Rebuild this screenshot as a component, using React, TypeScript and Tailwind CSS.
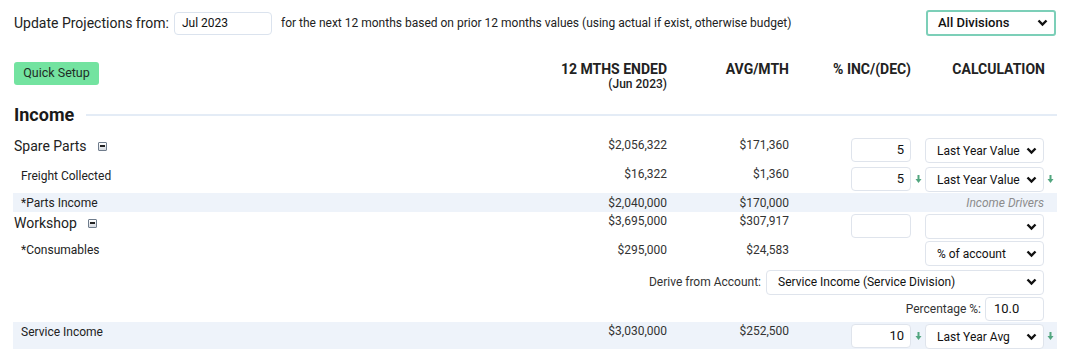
import React from "react";

const GreenArrow = () => (
  <svg width="7" height="9" viewBox="0 0 7 9" className="block">
    <rect x="2.5" y="0" width="2" height="5" fill="#52a67f" />
    <polygon points="0.5,4 6.5,4 3.5,8" fill="#52a67f" />
  </svg>
);

const Chevron = () => (
  <svg width="11" height="8" viewBox="0 0 11 8" className="block shrink-0">
    <polyline points="1.5,1.5 5.5,5.5 9.5,1.5" fill="none" stroke="#111" strokeWidth="2.4" />
  </svg>
);

const Collapse = () => (
  <span className="ml-[11px] inline-flex h-[9px] w-[9px] items-center justify-center rounded-[1px] border border-[#6f7c8c] bg-gradient-to-b from-white to-[#d4d8de]">
    <span className="h-[1.5px] w-[5px] bg-[#222]" />
  </span>
);

function NumBox({ value }: { value?: string }) {
  return (
    <div className="flex h-[24px] w-[60px] items-center justify-end rounded-[4px] border border-[#dfe4ec] bg-white pr-[6px] text-[13px] text-[#111]">
      {value}
    </div>
  );
}

function SelectBox({ value, width = "w-[119px]" }: { value?: string; width?: string }) {
  return (
    <div
      className={`flex h-[25px] ${width} items-center justify-between whitespace-nowrap rounded-[4px] border border-[#dfe4ec] bg-white pl-[11px] pr-[6px] text-[12px] text-[#111]`}
    >
      <span>{value}</span>
      <Chevron />
    </div>
  );
}

function Row({
  label,
  sub,
  total,
  avg,
  pct,
  calc,
  arrows,
  shaded,
  top = "pt-0",
  height = "h-[28px]",
}: {
  label: string;
  sub?: boolean;
  total: string;
  avg: string;
  pct?: string | null;
  calc?: string | null;
  arrows?: boolean;
  shaded?: boolean;
  top?: string;
  height?: string;
}) {
  return (
    <div className={`flex ${height} items-start ${shaded ? "bg-[#eef3fa]" : ""}`}>
      <div className={`flex flex-1 items-center ${top} ${sub ? "pl-[8px] text-[12px] leading-[18px]" : "pl-[1px] text-[14px] leading-[20px]"}`}>
        {label}
        {!sub && <Collapse />}
      </div>
      <div className="w-[150px] text-right text-[12px] leading-[18px] text-[#333]">{total}</div>
      <div className="w-[122px] text-right text-[12px] leading-[18px] text-[#333]">{avg}</div>
      <div className="flex w-[136px] items-center justify-end pt-[2px]">
        {pct !== null && <NumBox value={pct} />}
        <div className="flex w-[14px] justify-center pl-[1px]">{arrows && <GreenArrow />}</div>
      </div>
      <div className="flex w-[132px] items-center pt-[2px]">
        {calc !== null && <SelectBox value={calc} />}
        <div className="flex w-[13px] justify-center">{arrows && <GreenArrow />}</div>
      </div>
    </div>
  );
}

export default function App() {
  return (
    <div className="h-[349px] w-[1069px] overflow-hidden bg-white font-['Roboto',sans-serif] text-[#222]">
      {/* projection period */}
      <div className="mt-[10px] flex h-[26px] items-center pl-[14px] pr-[13px]">
        <span className="text-[14px]">Update Projections from:</span>
        <div className="ml-[5px] flex h-[23px] w-[98px] items-center rounded-[4px] border border-[#dbe3ee] pl-[7px] text-[12px] text-[#111]">
          Jul 2023
        </div>
        <span className="ml-[9px] text-[12px]">
          for the next 12 months based on prior 12 months values (using actual if exist, otherwise budget)
        </span>
        <div className="ml-auto flex h-[26px] w-[130px] items-center justify-between rounded-[3px] border-2 border-[#7ccfb8] pl-[10px] pr-[6px] text-[13px] font-medium text-[#111]">
          <span>All Divisions</span>
          <Chevron />
        </div>
      </div>

      {/* column headers */}
      <div className="ml-[13px] mt-[24px] flex w-[1044px] items-start">
        <div className="flex-1 pl-[1px]">
          <button className="h-[23px] w-[85px] rounded-[3px] bg-[#73e3a0] text-[12.5px] text-[#1f2d26]">
            Quick Setup
          </button>
        </div>
        <div className="w-[150px] pt-[1px] text-right text-[14px] font-bold leading-[16px]">
          12 MTHS ENDED
          <div className="text-[12px] font-medium leading-[14px]">(Jun 2023)</div>
        </div>
        <div className="w-[122px] pt-[1px] text-right text-[14px] font-bold leading-[16px]">AVG/MTH</div>
        <div className="w-[136px] pt-[1px] pr-[14px] text-right text-[14px] font-bold leading-[16px]">% INC/(DEC)</div>
        <div className="w-[132px] pt-[1px] pr-[12px] text-right text-[14px] font-bold leading-[16px]">CALCULATION</div>
      </div>

      {/* section heading */}
      <div className="ml-[14px] mt-[13px] flex w-[1043px] items-center">
        <span className="text-[18px] font-bold leading-[22px] text-[#1a1a1a]">Income</span>
        <div className="ml-[12px] h-[2px] flex-1 bg-[#e4ecf6]" />
      </div>

      <div className="ml-[13px] mt-[10px] w-[1044px]">
        <Row label="Spare Parts" height="h-[29px]" total="$2,056,322" avg="$171,360" pct="5" calc="Last Year Value" />
        <Row label="Freight Collected" sub top="pt-[2px]" total="$16,322" avg="$1,360" pct="5" calc="Last Year Value" arrows />
        <div className="flex h-[19px] items-center bg-[#eef3fa] text-[12px]">
          <div className="flex-1 pl-[8px]">*Parts Income</div>
          <div className="w-[150px] text-right text-[#333]">$2,040,000</div>
          <div className="w-[122px] text-right text-[#333]">$170,000</div>
          <div className="w-[268px] pr-[13px] text-right italic text-[#8c8c8c]">Income Drivers</div>
        </div>
        <Row label="Workshop" top="pt-[1px]" total="$3,695,000" avg="$307,917" pct="" calc="" />
        <div className="flex h-[28px] items-start text-[12px] leading-[18px]">
          <div className="flex-1 pl-[8px] pt-[1px]">*Consumables</div>
          <div className="w-[150px] pt-[1px] text-right text-[#333]">$295,000</div>
          <div className="w-[122px] pt-[1px] text-right text-[#333]">$24,583</div>
          <div className="w-[136px]" />
          <div className="flex w-[132px] items-center pt-[1px]">
            <SelectBox value="% of account" />
          </div>
        </div>
        <div className="flex h-[28px] items-center justify-end pr-[13px] text-[12px]">
          <span className="text-[#333]">Derive from Account:</span>
          <div className="ml-[5px]">
            <SelectBox value="Service Income (Service Division)" width="w-[278px]" />
          </div>
        </div>
        <div className="flex h-[26px] items-center justify-end pr-[13px] text-[12px]">
          <span className="text-[#333]">Percentage %:</span>
          <div className="ml-[4px] flex h-[24px] w-[59px] items-center rounded-[4px] border border-[#dfe4ec] pl-[8px] text-[13px] text-[#111]">
            10.0
          </div>
        </div>
        <Row label="Service Income" sub top="pt-[1px]" shaded total="$3,030,000" avg="$252,500" pct="10" calc="Last Year Avg" arrows />
      </div>
    </div>
  );
}
